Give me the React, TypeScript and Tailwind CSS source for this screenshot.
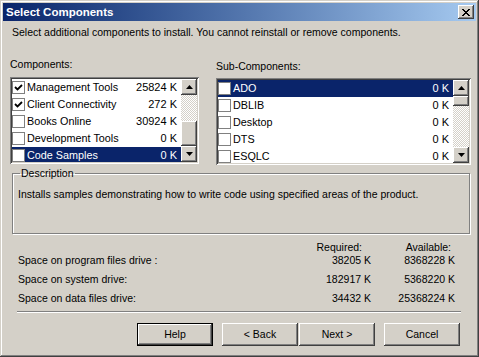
const raised =
  "bg-[#D4D0C8] shadow-[inset_-1px_-1px_#404040,inset_1px_1px_#ffffff,inset_-2px_-2px_#808080,inset_2px_2px_#d4d0c8]";
const sunken =
  "bg-white p-[2px] shadow-[inset_1px_1px_#808080,inset_-1px_-1px_#ffffff,inset_2px_2px_#404040,inset_-2px_-2px_#d4d0c8]";

function CheckBox({ checked }: { checked?: boolean }) {
  return (
    <div className="w-[13px] h-[13px] shrink-0 border border-[#808080] bg-white flex items-center justify-center">
      {checked && (
        <svg width="9" height="9" viewBox="0 0 9 9">
          <polyline points="1,4 3.5,6.5 8,2" fill="none" stroke="#000" strokeWidth="1.8" />
        </svg>
      )}
    </div>
  );
}

function Arrow({ down }: { down?: boolean }) {
  return (
    <svg width="7" height="4" viewBox="0 0 7 4">
      <polygon points={down ? "0,0 7,0 3.5,4" : "0,4 7,4 3.5,0"} fill="#000" />
    </svg>
  );
}

type Item = { label: string; size: string; checked?: boolean; selected?: boolean };

function ListBox({ items, thumb, atBottom }: { items: Item[]; thumb: number; atBottom?: boolean }) {
  return (
    <div className={`${sunken} h-[87px] flex`}>
      <div className="flex-1 overflow-hidden">
        {items.map((it) => (
          <div
            key={it.label}
            className={`flex h-[17px] items-center ${it.selected ? "bg-[#0A246A] text-white" : ""}`}
          >
            <CheckBox checked={it.checked} />
            <span className="ml-[2px] flex-1 text-[10.8px]">{it.label}</span>
            <span className="pr-[4px] text-[11px]">{it.size}</span>
          </div>
        ))}
      </div>
      <div className="w-[16px] flex flex-col">
        <div className={`${raised} h-[16px] flex items-center justify-center`}>
          <Arrow />
        </div>
        <div
          className={`flex-1 flex flex-col ${atBottom ? "justify-end" : "justify-start"} bg-[image:repeating-conic-gradient(#ffffff_0_25%,#d4d0c8_0_50%)] bg-[length:2px_2px]`}
        >
          <div className={raised} style={{ height: thumb }} />
        </div>
        <div className={`${raised} h-[16px] flex items-center justify-center`}>
          <Arrow down />
        </div>
      </div>
    </div>
  );
}

function Btn({ label, def }: { label: string; def?: boolean }) {
  return (
    <button
      className={`w-[76px] h-[23px] flex items-center justify-center ${
        def ? "border border-black" : ""
      } ${raised}`}
    >
      {label}
    </button>
  );
}

const components: Item[] = [
  { label: "Management Tools", size: "25824 K", checked: true },
  { label: "Client Connectivity", size: "272 K", checked: true },
  { label: "Books Online", size: "30924 K" },
  { label: "Development Tools", size: "0 K" },
  { label: "Code Samples", size: "0 K", selected: true },
];

const subs: Item[] = [
  { label: "ADO", size: "0 K", selected: true },
  { label: "DBLIB", size: "0 K" },
  { label: "Desktop", size: "0 K" },
  { label: "DTS", size: "0 K" },
  { label: "ESQLC", size: "0 K" },
];

const space = [
  ["Space on program files drive :", "38205 K", "8368228 K"],
  ["Space on system drive:", "182917 K", "5368220 K"],
  ["Space on data files drive:", "34432 K", "25368224 K"],
];

export default function App() {
  return (
    <div className="w-[479px] h-[357px] overflow-hidden bg-[#D4D0C8] p-[3px] font-['Liberation_Sans',Arial,sans-serif] text-[10.5px] leading-[13px] text-black shadow-[inset_-1px_-1px_#404040,inset_1px_1px_#d4d0c8,inset_-2px_-2px_#808080,inset_2px_2px_#ffffff]">
      {/* Title bar */}
      <div className="h-[18px] flex items-center bg-linear-to-r from-[#0A246A] to-[#A6CAF0] pl-[3px] pr-[2px]">
        <span className="flex-1 font-bold text-white text-[11.5px]">Select Components</span>
        <div className={`${raised} w-[16px] h-[14px] flex items-center justify-center`}>
          <svg width="8" height="7" viewBox="0 0 8 7" shapeRendering="crispEdges">
            <path
              d="M0 0h2v1H0zM6 0h2v1H6zM1 1h2v1H1zM5 1h2v1H5zM2 2h4v1H2zM3 3h2v1H3zM2 4h4v1H2zM1 5h2v1H1zM5 5h2v1H5zM0 6h2v1H0zM6 6h2v1H6z"
              fill="#000"
            />
          </svg>
        </div>
      </div>

      <div className="pl-[9px] mt-[5px]">
        Select additional components to install. You cannot reinstall or remove components.
      </div>

      {/* Lists */}
      <div className="flex mt-[19px] ml-[7px]">
        <div className="w-[189px]">
          <div>Components:</div>
          <div className="mt-[6px]">
            <ListBox items={components} thumb={25} atBottom />
          </div>
        </div>
        <div className="ml-[17px] w-[255px]">
          <div className="mt-[2px]">Sub-Components:</div>
          <div className="mt-[5px]">
            <ListBox items={subs} thumb={10} />
          </div>
        </div>
      </div>

      {/* Description */}
      <fieldset className="ml-[9px] mt-[2px] w-[458px] h-[67px] border border-[#808080] shadow-[inset_1px_1px_#ffffff,1px_1px_#ffffff] px-[5px]">
        <legend className="ml-[2px] px-[1px]">Description</legend>
        <div className="mt-[8px]">
          Installs samples demonstrating how to write code using specified areas of the product.
        </div>
      </fieldset>

      {/* Disk space */}
      <div className="ml-[15px] mt-[7px] w-[437px] grid grid-cols-[1fr_84px_84px]">
        <div />
        <div className="text-right pr-[9px]">Required:</div>
        <div className="text-right pr-[4px]">Available:</div>
        {space.map(([label, req, avail]) => (
          <div key={label} className="contents">
            <div className="h-[19px]">{label}</div>
            <div className="h-[19px] text-right">{req}</div>
            <div className="h-[19px] text-right">{avail}</div>
          </div>
        ))}
      </div>

      <div className="ml-[14px] w-[444px] h-[2px] border-t border-t-[#808080] border-b border-b-white" />

      {/* Buttons */}
      <div className="flex mt-[10px] ml-[134px]">
        <Btn label="Help" def />
        <div className="ml-[9px] flex gap-[1px]">
          <Btn label="< Back" />
          <Btn label="Next >" />
        </div>
        <div className="ml-[9px]">
          <Btn label="Cancel" />
        </div>
      </div>
    </div>
  );
}
